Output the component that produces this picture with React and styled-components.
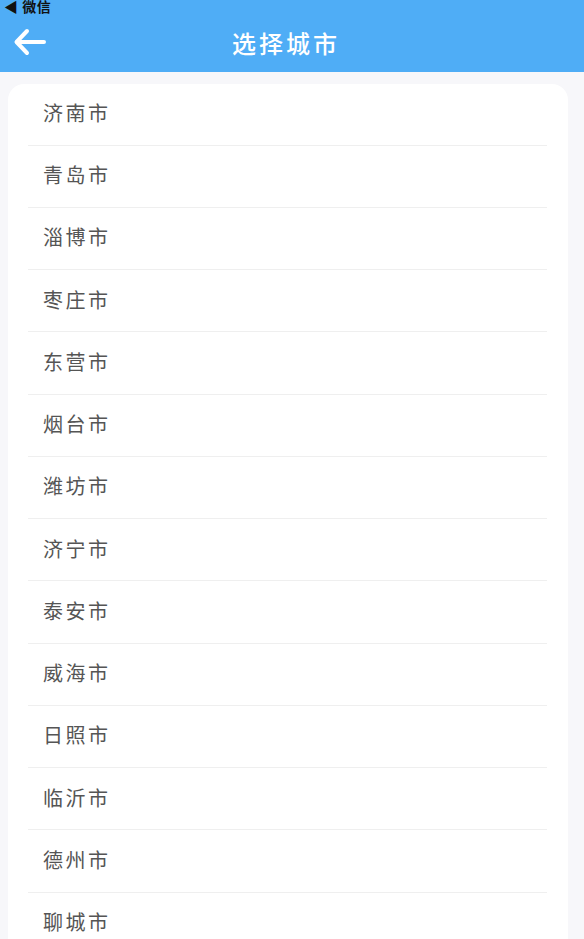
import React from 'react'
import styled, { createGlobalStyle } from 'styled-components'

const cities = [
    '济南市', '青岛市', '淄博市', '枣庄市', '东营市', '烟台市', '潍坊市',
    '济宁市', '泰安市', '威海市', '日照市', '临沂市', '德州市', '聊城市',
    '滨州市', '菏泽市'
]

const GlobalStyle = createGlobalStyle`
    html, body {
        margin: 0;
        padding: 0;
        background: #f7f7fa;
        font-family: "Noto Sans CJK SC", "Noto Sans", sans-serif;
    }
    #root {
        height: 939px;
        overflow: hidden;
    }
`

function App() {
    return (
        <Page>
            <GlobalStyle />
            <Header>
                <StatusBar>◀ 微信</StatusBar>
                <NavBar>
                    <BackButton aria-label="返回">
                        <svg width="34" height="28" viewBox="0 0 34 28" fill="none">
                            <path d="M31 14H4M14 3L3.5 14L14 25" stroke="#fff" strokeWidth="4" strokeLinecap="round" strokeLinejoin="round" />
                        </svg>
                    </BackButton>
                    <Title>选择城市</Title>
                </NavBar>
            </Header>
            <Card>
                {cities.map((c) => (
                    <Row key={c}>
                        <CityName>{c}</CityName>
                    </Row>
                ))}
            </Card>
        </Page>
    )
}

const Page = styled.div`
    min-height: 939px;
    background: #f7f7fa;
`

const Header = styled.header`
    background: #4fadf6;
    height: 72px;
    display: flex;
    flex-direction: column;
`

const StatusBar = styled.div`
    height: 14px;
    padding-left: 4px;
    font-size: 14px;
    line-height: 12px;
    font-weight: 700;
    color: #111;
    letter-spacing: 0.5px;
`

const NavBar = styled.div`
    position: relative;
    flex: 1;
    display: flex;
    align-items: center;
    justify-content: center;
    padding: 0 12px 1px 0;
`

const BackButton = styled.button`
    position: absolute;
    left: 13px;
    top: 50%;
    transform: translateY(-50%);
    margin-top: -1px;
    border: 0;
    padding: 0;
    background: none;
    display: flex;
`

const Title = styled.h1`
    margin: 0;
    color: #fff;
    font-size: 24px;
    font-weight: 500;
    letter-spacing: 3px;
`

const Card = styled.div`
    margin: 12px 16px 0 8px;
    background: #fff;
    border-radius: 16px;
    padding: 0 21px 0 20px;
`

const Row = styled.div`
    height: 62.25px;
    box-sizing: border-box;
    display: flex;
    align-items: center;
    padding: 0 0 3px 15px;
    border-bottom: 1px solid #efefef;
    &:first-child {
        height: 61.5px;
    }
`

const CityName = styled.span`
    font-size: 20px;
    color: #555;
    letter-spacing: 2.5px;
`

export default App
